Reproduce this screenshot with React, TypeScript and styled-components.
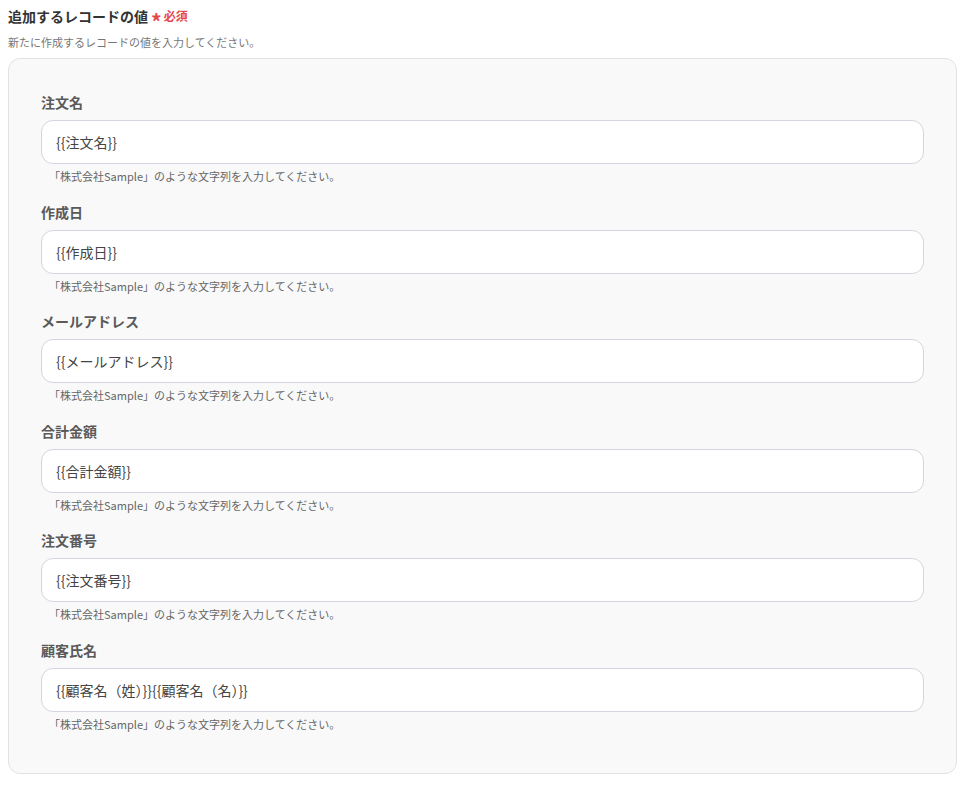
import React from 'react'
import styled, { createGlobalStyle } from 'styled-components'

const GlobalStyle = createGlobalStyle`
  body {
    margin: 8px;
    background: #fff;
    font-family: "Noto Sans CJK JP", "Noto Sans", sans-serif;
  }
`

const Header = styled.div`
  display: flex;
  align-items: center;
  gap: 3px;
  height: 16px;
`

const Title = styled.h2`
  margin: 0;
  font-size: 14px;
  line-height: 16px;
  font-weight: 700;
  color: #333;
`

const Required = styled.span`
  display: flex;
  align-items: center;
  gap: 2px;
  color: #e5484d;
  font-size: 12px;
  font-weight: 700;
  line-height: 16px;
  &:before {
    content: "*";
    font-size: 21px;
    line-height: 16px;
    padding-top: 9px;
  }
`

const Subtitle = styled.p`
  margin: 10px 0 8px;
  font-size: 11px;
  line-height: 16px;
  color: #777;
`

const Panel = styled.div`
  margin-right: 6px;
  background-color: #f9f9f9;
  border: 1px solid #e2e2e2;
  border-radius: 12px;
  padding: 33px 32px 23px 32px;
  display: flex;
  flex-direction: column;
`

const Field = styled.div`
  display: flex;
  flex-direction: column;
  margin-bottom: 17.6px;
`

const Label = styled.label`
  font-size: 14px;
  line-height: 20px;
  font-weight: 700;
  color: #5a5a5a;
  margin-bottom: 8px;
`

const Input = styled.input`
  box-sizing: border-box;
  height: 44px;
  width: 100%;
  border: 1px solid #d3d6de;
  border-radius: 12px;
  background: #fff;
  padding: 0 14px;
  font-family: inherit;
  font-size: 14px;
  color: #444;
  outline: none;
`

const Help = styled.span`
  margin-top: 4px;
  padding-left: 8px;
  font-size: 11px;
  line-height: 16px;
  color: #666;
`

const fields = [
  { label: '注文名', value: '{{注文名}}' },
  { label: '作成日', value: '{{作成日}}' },
  { label: 'メールアドレス', value: '{{メールアドレス}}' },
  { label: '合計金額', value: '{{合計金額}}' },
  { label: '注文番号', value: '{{注文番号}}' },
  { label: '顧客氏名', value: '{{顧客名（姓）}}{{顧客名（名）}}' },
]

const App = () => {
  return (
    <>
      <GlobalStyle />
      <Header>
        <Title>追加するレコードの値</Title>
        <Required>必須</Required>
      </Header>
      <Subtitle>新たに作成するレコードの値を入力してください。</Subtitle>
      <Panel>
        {fields.map((f) => (
          <Field key={f.label}>
            <Label>{f.label}</Label>
            <Input defaultValue={f.value} />
            <Help>「株式会社Sample」のような文字列を入力してください。</Help>
          </Field>
        ))}
      </Panel>
    </>
  )
}

export default App
